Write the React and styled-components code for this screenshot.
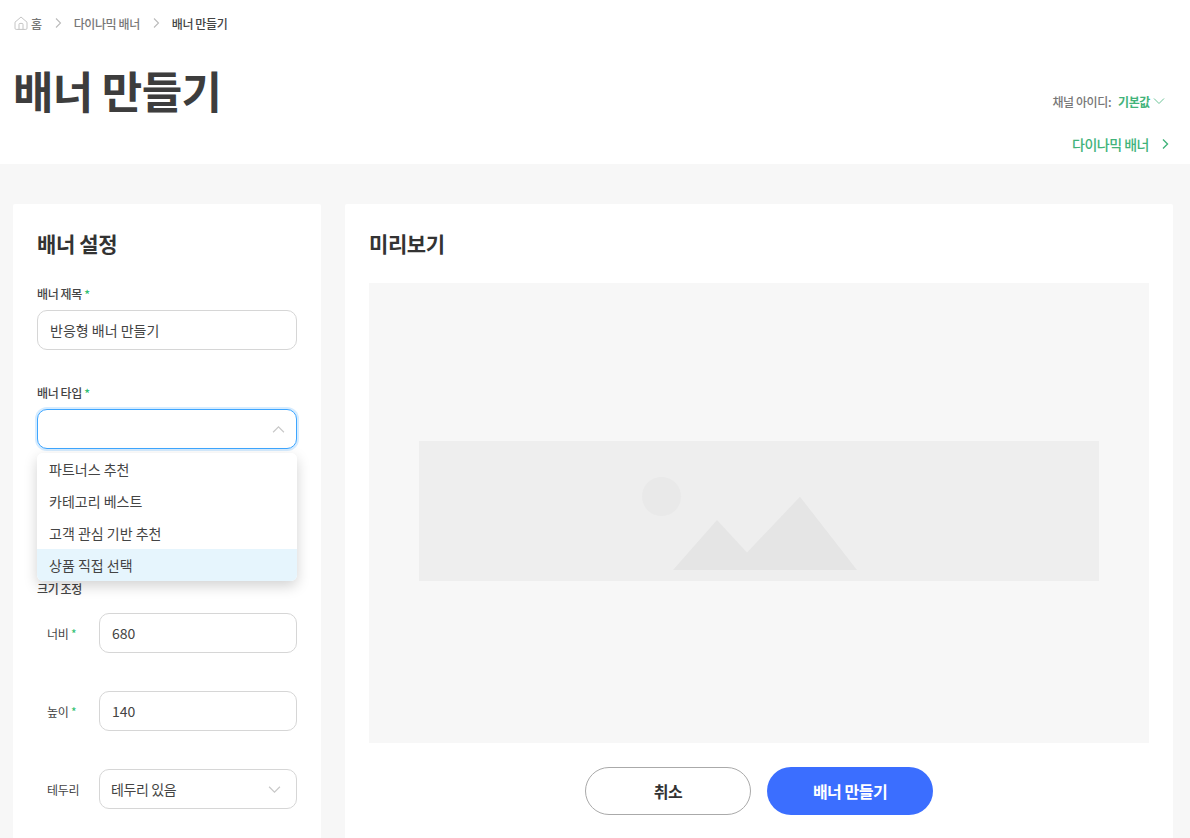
import React from 'react'
import styled, { createGlobalStyle } from 'styled-components'

const GlobalStyle = createGlobalStyle`
  html, body {
    margin: 0;
    padding: 0;
    height: 100%;
    overflow: hidden;
    background: #f7f7f7;
  }
  body {
    font-family: "Noto Sans CJK KR", "Noto Sans", sans-serif;
    color: #333;
  }
  #root {
    height: 838px;
    overflow: hidden;
  }
`

const OPTIONS = ['파트너스 추천', '카테고리 베스트', '고객 관심 기반 추천', '상품 직접 선택']

const Chevron = ({ dir = 'right', size = 12, color = '#bbb', weight = 1.1 }) => {
  const paths = {
    right: 'M4 1.5 L8.5 6 L4 10.5',
    down: 'M1 3.5 L6 8.5 L11 3.5',
    up: 'M1 8.5 L6 3.5 L11 8.5',
  }
  return (
    <svg width={size} height={size} viewBox="0 0 12 12" fill="none">
      <path d={paths[dir]} stroke={color} strokeWidth={weight} />
    </svg>
  )
}

const HomeIcon = () => (
  <svg width="14" height="14" viewBox="0 0 14 14" fill="none" stroke="#c4c4c4" strokeWidth="1">
    <path d="M1 6.2 L7 1 L13 6.2 V12.2 Q13 13.4 11.8 13.4 H2.2 Q1 13.4 1 12.2 Z" />
    <path d="M5 13.4 V8.4 Q5 7.4 6 7.4 H8 Q9 7.4 9 8.4 V13.4" />
  </svg>
)

const Placeholder = () => (
  <svg width="216" height="94" viewBox="0 0 216 94" fill="none">
    <circle cx="19.5" cy="19.5" r="19.5" fill="#e9e9e9" />
    <path d="M31 93 L75 43 L105 75.5 L158 19.7 L215 93 Z" fill="#e5e5e5" />
  </svg>
)

const App = () => (
  <>
    <GlobalStyle />
    <Header>
      <Breadcrumb>
        <Crumb>
          <HomeIcon />
          <span>홈</span>
        </Crumb>
        <Chevron />
        <Crumb>다이나믹 배너</Crumb>
        <Chevron />
        <Crumb active>배너 만들기</Crumb>
      </Breadcrumb>
      <TitleRow>
        <Title>배너 만들기</Title>
        <HeaderSide>
          <Channel>
            채널 아이디:
            <ChannelValue>기본값</ChannelValue>
            <Chevron dir="down" color="#6cc497" weight={1} />
          </Channel>
          <BackLink>
            다이나믹 배너
            <Chevron color="#41b37a" weight={1.4} />
          </BackLink>
        </HeaderSide>
      </TitleRow>
    </Header>
    <Content>
      <SettingsCard>
        <CardTitle>배너 설정</CardTitle>
        <Field>
          <Label>
            배너 제목 <Star>*</Star>
          </Label>
          <Input>반응형 배너 만들기</Input>
        </Field>
        <Field hasMenu>
          <Label>
            배너 타입 <Star>*</Star>
          </Label>
          <SelectBox open>
            <span />
            <Chevron dir="up" color="#c8c8c8" size={13} />
          </SelectBox>
          <Menu>
            {OPTIONS.map((option, i) => (
              <MenuItem key={option} selected={i === OPTIONS.length - 1}>
                {option}
              </MenuItem>
            ))}
          </Menu>
        </Field>
        <SizeLabel>크기 조정</SizeLabel>
        <SizeRow>
          <SizeLabelText>
            너비 <Star>*</Star>
          </SizeLabelText>
          <Input>680</Input>
        </SizeRow>
        <SizeRow>
          <SizeLabelText>
            높이 <Star>*</Star>
          </SizeLabelText>
          <Input>140</Input>
        </SizeRow>
        <SizeRow>
          <SizeLabelText>테두리</SizeLabelText>
          <SelectBox>
            <span>테두리 있음</span>
            <Chevron dir="down" color="#c8c8c8" size={13} />
          </SelectBox>
        </SizeRow>
      </SettingsCard>
      <PreviewCard>
        <CardTitle>미리보기</CardTitle>
        <PreviewArea>
          <BannerFrame>
            <Placeholder />
          </BannerFrame>
        </PreviewArea>
        <Actions>
          <Button>취소</Button>
          <Button primary>배너 만들기</Button>
        </Actions>
      </PreviewCard>
    </Content>
  </>
)

const Header = styled.header`
  height: 164px;
  box-sizing: border-box;
  padding: 14px 19px 0 14px;
  background: #fff;
`
const Breadcrumb = styled.nav`
  display: flex;
  align-items: center;
  gap: 10px;
  height: 18px;
  font-size: 12px;
`
const Crumb = styled.span`
  display: flex;
  align-items: center;
  gap: 3px;
  font-weight: 500;
  letter-spacing: -0.4px;
  color: ${({ active }) => (active ? '#444' : '#777')};
`
const TitleRow = styled.div`
  display: flex;
  justify-content: space-between;
  margin-top: 24px;
`
const Title = styled.h1`
  margin: 0 0 0 -1px;
  font-size: 44px;
  line-height: 68px;
  font-weight: 700;
  letter-spacing: -0.7px;
  color: #3d3d3d;
`
const HeaderSide = styled.div`
  display: flex;
  flex-direction: column;
  align-items: flex-end;
  gap: 23px;
  padding-top: 35px;
`
const Channel = styled.div`
  display: flex;
  align-items: center;
  height: 20px;
  padding-right: 6px;
  font-size: 12px;
  font-weight: 500;
  letter-spacing: -0.4px;
  color: #777;
`
const ChannelValue = styled.span`
  margin: 0 3px 0 7px;
  font-weight: 700;
  color: #41b37a;
`
const BackLink = styled.a`
  display: flex;
  align-items: center;
  gap: 10px;
  height: 20px;
  font-size: 14px;
  font-weight: 500;
  letter-spacing: -0.5px;
  color: #41b37a;
`
const Content = styled.main`
  display: flex;
  align-items: flex-start;
  gap: 24px;
  padding: 40px 17px 0 13px;
`
const Card = styled.section`
  box-sizing: border-box;
  background: #fff;
  padding: 24px;
  border-radius: 2px;
  min-height: 700px;
`
const SettingsCard = styled(Card)`
  flex: 0 0 308px;
`
const PreviewCard = styled(Card)`
  flex: 1;
`
const CardTitle = styled.h2`
  margin: 0;
  height: 32px;
  font-size: 21px;
  line-height: 30px;
  font-weight: 700;
  letter-spacing: -0.4px;
  color: #333;
`
const Field = styled.div`
  position: relative;
  margin-top: 25px;
  margin-bottom: ${({ hasMenu }) => (hasMenu ? '131px' : '34px')};
`
const Label = styled.div`
  height: 18px;
  margin-bottom: 7px;
  font-size: 12px;
  line-height: 18px;
  font-weight: 500;
  letter-spacing: -0.4px;
  color: #444;
`
const Star = styled.span`
  color: #2fbf71;
`
const Input = styled.div`
  flex: 1;
  box-sizing: border-box;
  height: 40px;
  padding: 0 12px;
  border: 1px solid #d6d6d6;
  border-radius: 10px;
  background: #fff;
  font-size: 14px;
  line-height: 38px;
  color: #444;
`
const SelectBox = styled.div`
  flex: 1;
  display: flex;
  align-items: center;
  justify-content: space-between;
  box-sizing: border-box;
  height: 40px;
  padding: 0 ${({ open }) => (open ? '11px' : '15px')} 0 11px;
  border: 1px solid ${({ open }) => (open ? '#3ea6ff' : '#d6d6d6')};
  border-radius: 10px;
  background: #fff;
  box-shadow: ${({ open }) => (open ? '0 0 0 2px #d6ecff' : 'none')};
  font-size: 14px;
  letter-spacing: -0.4px;
  color: #444;
`
const Menu = styled.ul`
  position: absolute;
  top: 69px;
  left: 0;
  right: 0;
  z-index: 2;
  margin: 0;
  padding: 0;
  list-style: none;
  overflow: hidden;
  border-radius: 6px;
  background: #fff;
  box-shadow: 0 5px 14px rgba(0, 0, 0, 0.18);
`
const MenuItem = styled.li`
  height: 32px;
  padding: 0 12px;
  font-size: 14px;
  line-height: 32px;
  color: #444;
  background: ${({ selected }) => (selected ? '#e6f5fd' : '#fff')};
`
const SizeLabel = styled(Label)`
  margin-bottom: 15px;
`
const SizeRow = styled.div`
  display: flex;
  align-items: center;
  margin-bottom: 38px;
`
const SizeLabelText = styled.div`
  flex: 0 0 52px;
  padding-left: 10px;
  box-sizing: content-box;
  width: 52px;
  font-size: 12px;
  letter-spacing: -0.3px;
  color: #444;
`
const PreviewArea = styled.div`
  display: flex;
  align-items: center;
  justify-content: center;
  box-sizing: border-box;
  height: 460px;
  margin-top: 23px;
  padding-bottom: 4px;
  background: #f7f7f7;
`
const BannerFrame = styled.div`
  display: flex;
  align-items: flex-end;
  justify-content: flex-start;
  box-sizing: border-box;
  width: 680px;
  height: 140px;
  padding: 0 0 10px 223px;
  background: #eee;
`
const Actions = styled.div`
  display: flex;
  justify-content: center;
  gap: 16px;
  margin-top: 24px;
`
const Button = styled.button`
  width: 166px;
  height: 48px;
  border: ${({ primary }) => (primary ? 'none' : '1px solid #aaa')};
  border-radius: 24px;
  background: ${({ primary }) => (primary ? '#3b6eff' : '#fff')};
  color: ${({ primary }) => (primary ? '#fff' : '#333')};
  font-family: inherit;
  font-size: 16px;
  font-weight: 700;
  letter-spacing: -0.5px;
`

export default App
